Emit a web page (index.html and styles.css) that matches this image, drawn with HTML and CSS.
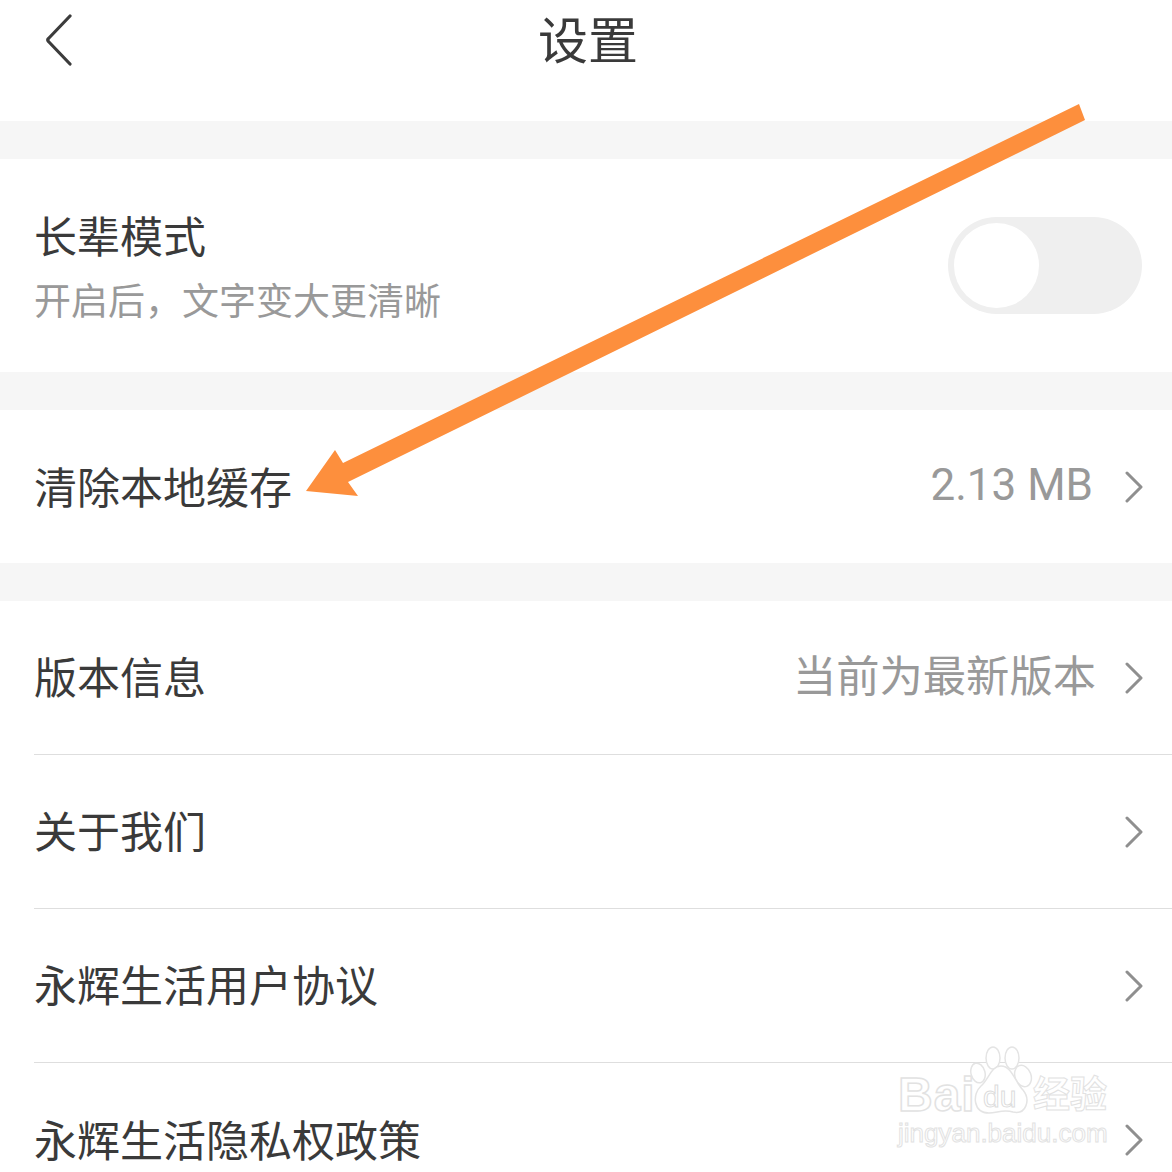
FILE: index.html
```html
<!DOCTYPE html>
<html lang="zh-CN">
<head>
  <meta charset="utf-8">
  <title>设置</title>
  <link rel="stylesheet" href="styles.css">
</head>
<body>
  <div class="page">
    <div class="header">
      <svg class="back" viewBox="0 0 30 52" width="30" height="52">
        <path d="M26 2 L4.500 24.500 Q3 26 4.500 27.500 L26 50" fill="none" stroke="#3c3c3c" stroke-width="3.200" stroke-linecap="round"/>
      </svg>
      <h1 class="title">设置</h1>
    </div>

    <div class="gap"></div>

    <div class="row row-tall">
      <div class="row-text">
        <div class="label">长辈模式</div>
        <div class="sub">开启后，文字变大更清晰</div>
      </div>
      <div class="switch"><div class="knob"></div></div>
    </div>

    <div class="gap"></div>

    <div class="row row-cache">
      <div class="label">清除本地缓存</div>
      <div class="value value-num">2.13 MB</div>
      <svg class="chev" viewBox="0 0 18 32" width="18" height="32"><path d="M2 2 L16 16 L2 30" fill="none" stroke="#8f8f8f" stroke-width="3" stroke-linecap="round" stroke-linejoin="round"/></svg>
    </div>

    <div class="gap"></div>

    <div class="row lined">
      <div class="label">版本信息</div>
      <div class="value">当前为最新版本</div>
      <svg class="chev" viewBox="0 0 18 32" width="18" height="32"><path d="M2 2 L16 16 L2 30" fill="none" stroke="#8f8f8f" stroke-width="3" stroke-linecap="round" stroke-linejoin="round"/></svg>
    </div>
    <div class="row lined">
      <div class="label">关于我们</div>
      <svg class="chev" viewBox="0 0 18 32" width="18" height="32"><path d="M2 2 L16 16 L2 30" fill="none" stroke="#8f8f8f" stroke-width="3" stroke-linecap="round" stroke-linejoin="round"/></svg>
    </div>
    <div class="row lined">
      <div class="label">永辉生活用户协议</div>
      <svg class="chev" viewBox="0 0 18 32" width="18" height="32"><path d="M2 2 L16 16 L2 30" fill="none" stroke="#8f8f8f" stroke-width="3" stroke-linecap="round" stroke-linejoin="round"/></svg>
    </div>
    <div class="row">
      <div class="label">永辉生活隐私权政策</div>
      <svg class="chev" viewBox="0 0 18 32" width="18" height="32"><path d="M2 2 L16 16 L2 30" fill="none" stroke="#8f8f8f" stroke-width="3" stroke-linecap="round" stroke-linejoin="round"/></svg>
    </div>

    <!-- annotation drawn on top of the screenshot -->
    <svg class="arrow" viewBox="0 0 1172 1172" width="1172" height="1172">
      <polygon points="1079,104 1085,120 348,482 358,496 306,491 335,450 343,463" fill="#fd8f3d"/>
    </svg>

    <div class="watermark">
      <div class="wm-top">
        <span class="wm-bai">Bai</span>
        <svg class="paw" viewBox="0 0 64 72" width="64" height="72">
          <g fill="#fff" stroke="#e4e4e4" stroke-width="1.500">
            <ellipse cx="8" cy="27" rx="7" ry="10" transform="rotate(-15 8 27)"/>
            <ellipse cx="23" cy="12" rx="7" ry="11"/>
            <ellipse cx="42" cy="12" rx="7" ry="11"/>
            <ellipse cx="53" cy="30" rx="8" ry="11" transform="rotate(-20 53 30)"/>
            <path d="M31 20 C21 20 19 33 11 40 C2 48 3 67 19 67 C27 67 33 63 43 66 C56 69 61 54 53 44 C45 36 42 20 31 20 Z"/>
          </g>
          <text class="wm-du" x="13" y="61">du</text>
        </svg>
        <span class="wm-cn">经验</span>
      </div>
      <div class="wm-url">jingyan.baidu.com</div>
    </div>
  </div>
</body>
</html>
```

FILE: styles.css
```css
* {
  box-sizing: border-box;
}
body {
  margin: 0;
  background-color: #fff;
  font-family: "Noto Sans CJK SC", "Noto Sans", sans-serif;
  color: #3a3a3a;
}
.page {
  position: relative;
  width: 1172px;
  height: 1172px;
  overflow: hidden;
}
.header {
  height: 121px;
  position: relative;
  display: flex;
  justify-content: center;
  padding-top: 7px;
  padding-left: 4px;
}
.back {
  position: absolute;
  left: 44px;
  top: 14px;
}
.title {
  margin: 0;
  font-size: 50px;
  font-weight: 400;
  line-height: 60px;
}
.gap {
  height: 38px;
  background-color: #f6f6f6;
}
.row {
  height: 154px;
  margin-left: 34px;
  padding-right: 29px;
  padding-bottom: 5px;
  display: flex;
  align-items: center;
}
.row-tall {
  height: 213px;
  padding-right: 30px;
  padding-bottom: 0;
}
.row-cache {
  height: 153px;
  padding-bottom: 3px;
}
.lined {
  border-bottom: 1px solid #dedede;
}
.label {
  font-size: 43px;
  line-height: 56px;
}
.row-text {
  display: flex;
  flex-direction: column;
  gap: 12px;
  margin-top: -2px;
}
.sub {
  font-size: 37px;
  line-height: 50px;
  color: #999;
}
.value {
  margin-left: auto;
  margin-right: 29px;
  margin-bottom: 5px;
  font-size: 43.300px;
  line-height: 56px;
  color: #999;
}
.value-num {
  font-family: Roboto, sans-serif;
  font-weight: 400;
  font-size: 44px;
  margin-right: 32px;
  margin-bottom: 0;
}
.chev {
  margin-left: auto;
  margin-top: 5px;
  flex-shrink: 0;
}
.row-cache .chev {
  margin-top: 3px;
}
.value + .chev {
  margin-left: 0;
}
.switch {
  margin-left: auto;
  width: 194px;
  height: 97px;
  border-radius: 49px;
  background-color: #efefef;
  padding: 6px;
}
.knob {
  width: 85px;
  height: 85px;
  border-radius: 50%;
  background-color: #fff;
}
.arrow {
  position: absolute;
  left: 0;
  top: 0;
}
.watermark {
  position: absolute;
  left: 898px;
  top: 1046px;
  width: 214px;
}
.wm-top {
  display: flex;
  align-items: flex-end;
  height: 72px;
}
.wm-bai {
  font-family: "Liberation Sans", sans-serif;
  font-weight: 700;
  font-size: 48px;
  line-height: 56px;
  letter-spacing: 1px;
  margin-bottom: -5px;
  color: #fff;
  -webkit-text-stroke: 1.500px #e2e2e2;
  width: 72px;
  flex-shrink: 0;
}
.paw {
  flex-shrink: 0;
  margin-right: -1px;
}
.wm-du {
  font-family: "Liberation Sans", sans-serif;
  font-size: 30px;
  fill: #fff;
  stroke: #dcdcdc;
  stroke-width: 1px;
}
.wm-cn {
  font-size: 37px;
  font-weight: 700;
  line-height: 48px;
  color: #fff;
  -webkit-text-stroke: 1px #e2e2e2;
  white-space: nowrap;
  margin-bottom: 2px;
}
.wm-url {
  font-family: "Liberation Sans", sans-serif;
  font-size: 26px;
  line-height: 28px;
  margin-top: 1px;
  color: #fff;
  -webkit-text-stroke: 1px #e2e2e2;
  white-space: nowrap;
}
```
